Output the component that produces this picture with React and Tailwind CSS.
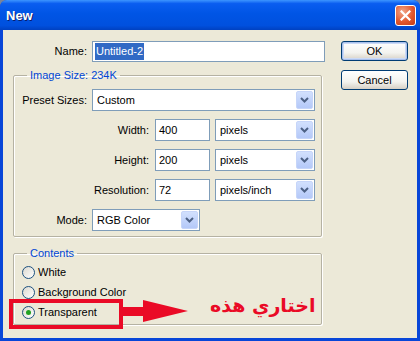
import { useState } from 'react'

function Select({ value, className }) {
  return (
    <div className={`flex h-[22px] items-center justify-between border border-[#7f9db9] bg-white pl-[4px] pr-[1px] ${className}`}>
      <span>{value}</span>
      <span className="flex h-[18px] w-[17px] items-center justify-center rounded-[2px] bg-[linear-gradient(to_bottom,#d2e0fd,#b4c8f8)] border border-[#c6d5f9]">
        <svg width="9" height="6" viewBox="0 0 9 6">
          <path d="M1 1 L4.5 4.5 L8 1" fill="none" stroke="#4d6185" strokeWidth="2" />
        </svg>
      </span>
    </div>
  )
}

function Field({ label, value, unit }) {
  return (
    <div className="flex h-[22px] items-center">
      <span className="w-[135px] text-right">{label}</span>
      <div className="ml-[6px] flex h-[22px] w-[55px] items-center border border-[#7f9db9] bg-white pl-[3px]">{value}</div>
      <Select value={unit} className="ml-[5px] w-[100px]" />
    </div>
  )
}

function Radio({ label, checked }) {
  return (
    <div className="flex h-[20px] items-center pl-[8px]">
      <span className="flex h-[13px] w-[13px] items-center justify-center rounded-full border border-[#1c5180] bg-[linear-gradient(135deg,#dcd9cf,#ffffff)]">
        {checked && <span className="h-[5px] w-[5px] rounded-full bg-[#21a121]" />}
      </span>
      <span className="ml-[3px]">{label}</span>
    </div>
  )
}

function XButton({ label, def }) {
  return (
    <button
      className={`h-[20px] w-[67px] rounded-[3px] border border-[#003c74] bg-[linear-gradient(to_bottom,#ffffff,#f3f3ef_60%,#d6d0c5)] text-black ${def ? 'shadow-[inset_0_0_0_1px_#a9c0ec,inset_0_0_0_2px_#cbdaf6]' : ''}`}
    >
      {label}
    </button>
  )
}

export default function App() {
  const [name] = useState('Untitled-2')

  return (
    <div className="relative h-[341px] w-[420px] overflow-hidden bg-[#7a8499] font-['Liberation_Sans',Arial,sans-serif] text-[11px] text-black">
      <div className="flex h-full flex-col rounded-t-[7px] bg-[#0846d8]">
        {/* title bar */}
        <div className="flex h-[30px] shrink-0 items-center justify-between rounded-t-[7px] bg-[linear-gradient(to_bottom,#3d95ff_0%,#0a5df0_12%,#0055e5_45%,#0050de_85%,#0041c1_100%)] pl-[6px] pr-[4px]">
          <span className="mt-[1px] text-[13px] font-bold text-white [text-shadow:1px_1px_0_#0a1e6e]">New</span>
          <span className="flex h-[21px] w-[21px] items-center justify-center rounded-[3px] border border-white bg-[radial-gradient(circle_at_35%_30%,#f1a78a,#e2582f_55%,#c43b14)]">
            <svg width="11" height="11" viewBox="0 0 11 11">
              <path d="M1.5 1.5 L9.5 9.5 M9.5 1.5 L1.5 9.5" stroke="white" strokeWidth="2.2" strokeLinecap="square" />
            </svg>
          </span>
        </div>

        {/* body */}
        <div className="mx-[3px] mb-[3px] flex flex-1 bg-[#ece9d8] pl-[10px]">
          <div className="w-[312px] pt-[11px]">
            <div className="flex h-[21px] items-center">
              <span className="w-[74px] text-right">Name:</span>
              <div className="ml-[5px] flex h-[21px] w-[233px] items-center border border-[#7f9db9] bg-white pl-[2px]">
                <span className="bg-[#316ac5] px-[1px] text-white">{name}</span>
              </div>
            </div>

            <fieldset className="mt-[6px] w-[309px] rounded-[2px] border border-[#b5b2a3] pb-[5px] shadow-[1px_1px_0_#ffffff,inset_1px_1px_0_#ffffff]">
              <legend className="ml-[13px] px-[3px] leading-[14px] text-[#0046d5]">Image Size: 234K</legend>
              <div className="flex flex-col gap-[8px] pt-[7px]">
                <div className="flex h-[22px] items-center">
                  <span className="w-[73px] text-right">Preset Sizes:</span>
                  <Select value="Custom" className="ml-[5px] w-[223px]" />
                </div>
                <Field label="Width:" value="400" unit="pixels" />
                <Field label="Height:" value="200" unit="pixels" />
                <Field label="Resolution:" value="72" unit="pixels/inch" />
                <div className="flex h-[22px] items-center">
                  <span className="w-[73px] text-right">Mode:</span>
                  <Select value="RGB Color" className="ml-[5px] w-[108px]" />
                </div>
              </div>
            </fieldset>

            <fieldset className="mt-[9px] w-[309px] rounded-[2px] border border-[#b5b2a3] pb-[2px] shadow-[1px_1px_0_#ffffff,inset_1px_1px_0_#ffffff]">
              <legend className="ml-[13px] px-[3px] leading-[14px] text-[#0046d5]">Contents</legend>
              <div className="pt-[2px]">
                <Radio label="White" />
                <Radio label="Background Color" />
                <Radio label="Transparent" checked />
              </div>
            </fieldset>
          </div>

          <div className="ml-[16px] flex flex-col gap-[9px] pt-[11px]">
            <XButton label="OK" def />
            <XButton label="Cancel" />
          </div>
        </div>
      </div>

      {/* annotation overlay */}
      <div className="absolute left-[9px] top-[299px] h-[30px] w-[114px] border-[4px] border-[#ea0a26]" />
      <svg className="absolute left-[122px] top-[299px]" width="68" height="24" viewBox="0 0 68 24">
        <path d="M0 8 H21 V1 L66 12 L21 23 V17 H0 Z" fill="#ea0a26" />
      </svg>
      <span dir="rtl" className="absolute left-[210px] top-[290px] font-['DejaVu_Sans',sans-serif] text-[19px] font-bold leading-[30px] text-[#ea0a26]">
        اختاري هذه
      </span>
    </div>
  )
}
